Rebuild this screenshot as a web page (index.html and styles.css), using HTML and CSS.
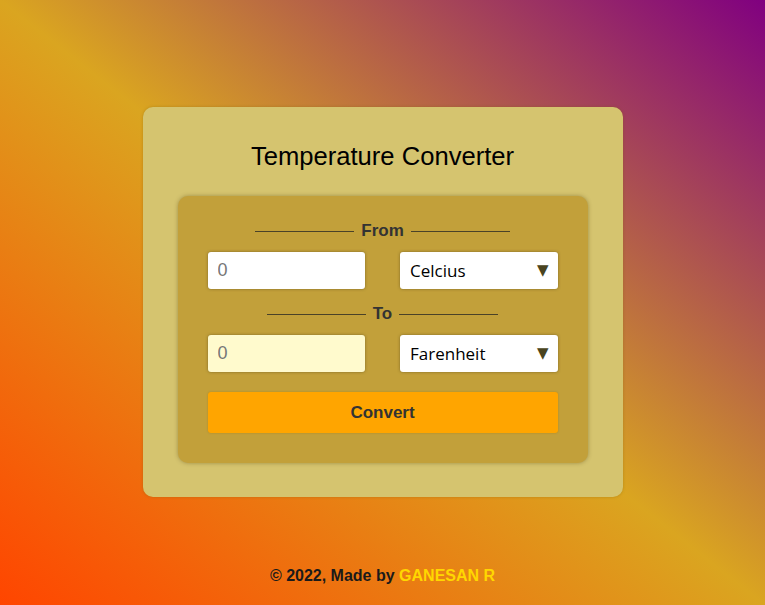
FILE: index.html
```html
<!DOCTYPE html>
<html lang="en">
<head>
<meta charset="utf-8">
<title>Temperature Converter</title>
<link rel="stylesheet" href="styles.css">
</head>
<body>
  <main class="card">
    <h1 class="title">Temperature Converter</h1>
    <section class="panel">
      <div class="label"><span class="rule"></span><span class="label-text">From</span><span class="rule"></span></div>
      <div class="row">
        <input class="field" type="text" placeholder="0">
        <div class="select-wrap"><select class="select"><option>Celcius</option><option>Farenheit</option><option>Kelvin</option></select></div>
      </div>
      <div class="label"><span class="rule"></span><span class="label-text">To</span><span class="rule"></span></div>
      <div class="row">
        <input class="field field-out" type="text" placeholder="0" readonly>
        <div class="select-wrap"><select class="select"><option>Farenheit</option><option>Celcius</option><option>Kelvin</option></select></div>
      </div>
      <button class="convert" type="button">Convert</button>
    </section>
  </main>
  <footer class="footer">© 2022, Made by <span class="author">GANESAN R</span></footer>
</body>
</html>
```
FILE: styles.css
```css
html, body {
  margin: 0;
  height: 100%;
}
body {
  min-height: 605px;
  background: linear-gradient(to top right, #ff4500, #daa520, #800080);
  font-family: "Liberation Sans", Arial, sans-serif;
  display: flex;
  flex-direction: column;
  align-items: center;
  padding-top: 107px;
  box-sizing: border-box;
}
.card {
  width: 480px;
  box-sizing: border-box;
  padding: 35px 35px 34px;
  background: #d5c46f;
  border-radius: 10px;
  box-shadow: 0 0 3px rgba(120, 90, 0, 0.35);
}
.title {
  margin: 0 0 26px;
  font-size: 25.6px;
  line-height: 28px;
  font-weight: normal;
  text-align: center;
  color: #000;
}
.panel {
  background: #c2a03a;
  border-radius: 10px;
  padding: 25px 30px 30px;
  box-shadow: 0 0 4px rgba(90, 70, 20, 0.45);
}
.label {
  display: flex;
  align-items: center;
  justify-content: center;
  gap: 7px;
  height: 20px;
  margin-bottom: 11px;
}
.row + .label { margin-top: 15px; }
.rule {
  width: 99px;
  height: 1px;
  background: #4a4228;
}
.label-text {
  font-size: 17px;
  font-weight: bold;
  color: #333;
}
.row {
  display: grid;
  grid-template-columns: 1fr 1fr;
  gap: 35px;
}
.field, .select {
  display: block;
  width: 100%;
  height: 37px;
  box-sizing: border-box;
  border: none;
  border-radius: 3px;
  box-shadow: 0 0 3px rgba(60, 50, 20, 0.5);
  outline: none;
}
.field {
  padding: 0 10px;
  font-family: "Liberation Sans", Arial, sans-serif;
  font-size: 18px;
  background: #fff;
  color: #333;
}
.field::placeholder { color: #777; }
.field-out { background: #fffacd; }
.select-wrap { position: relative; }
.select-wrap::after {
  content: "▼";
  position: absolute;
  right: 9px;
  top: 9px;
  font-family: "DejaVu Sans", sans-serif;
  font-size: 15px;
  line-height: 18px;
  color: #4a4420;
  pointer-events: none;
}
.select {
  appearance: none;
  -webkit-appearance: none;
  padding: 0 10px;
  font-family: "Open Sans", "Noto Sans", sans-serif;
  font-size: 17px;
  color: #000;
  background: #fff;
}
.convert {
  display: block;
  width: 100%;
  height: 41px;
  margin-top: 20px;
  border: none;
  border-radius: 3px;
  background: #ffa500;
  color: #333;
  font-family: "Liberation Sans", Arial, sans-serif;
  font-size: 17px;
  font-weight: bold;
  box-shadow: 0 0 2px rgba(140, 100, 0, 0.4);
}
.footer {
  margin-top: 70px;
  font-size: 16px;
  line-height: 18px;
  font-weight: bold;
  color: #1a1a1a;
}
.author { color: #ffd700; }
```
